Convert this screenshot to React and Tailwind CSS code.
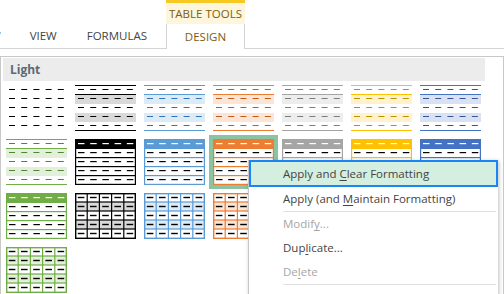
import React from 'react';

// table style thumbnails, drawn like Excel's gallery previews
const light = (line, dash, band) => ({ t: 'light', line, dash, band });
const medium = (line) => ({ t: 'medium', line });
const grid = (line, band) => ({ t: 'grid', line, band });

const gallery = [
    [
        light(null, '#000', null),
        light('#000', '#000', '#d9d9d9'),
        light('#5b9bd5', '#2e75b6', '#ddebf7'),
        light('#ed7d31', '#c55a11', '#fce4d6'),
        light('#a5a5a5', '#7b7b7b', '#ededed'),
        light('#ffc000', '#bf8f00', '#fff2cc'),
        light('#4472c4', '#2f5597', '#d9e1f2'),
    ],
    [
        light('#70ad47', '#548235', '#e2efda'),
        medium('#000'),
        medium('#5b9bd5'),
        { ...medium('#ed7d31'), selected: true },
        medium('#a5a5a5'),
        medium('#ffc000'),
        medium('#4472c4'),
    ],
    [
        medium('#70ad47'),
        grid('#000', '#d9d9d9'),
        grid('#5b9bd5', '#ddebf7'),
        grid('#ed7d31', '#fce4d6'),
        grid('#a5a5a5', '#ededed'),
        grid('#ffc000', '#fff2cc'),
        grid('#4472c4', '#d9e1f2'),
    ],
    [grid('#70ad47', '#e2efda')],
];

const cols = [0, 1, 2, 3, 4];
const rowsIdx = [0, 1, 2, 3, 4];

const Thumb = ({ s }) => {
    if (s.t === 'light') {
        return (
            <svg width="61" height="46" viewBox="0 0 61 46" className="block">
                {s.band && (
                    <>
                        <rect x="0" y="10" width="61" height="9" fill={s.band} />
                        <rect x="0" y="28" width="61" height="9" fill={s.band} />
                    </>
                )}
                {s.line && (
                    <>
                        <rect x="0" y="0" width="61" height="1" fill={s.line} />
                        <rect x="0" y="9" width="61" height="1" fill={s.line} />
                        <rect x="0" y="45" width="61" height="1" fill={s.line} />
                    </>
                )}
                {rowsIdx.map((r) =>
                    cols.map((c) => (
                        <rect key={r + '-' + c} x={12.2 * c + 3} y={9 * r + 4} width="6" height="1" fill={s.dash} />
                    ))
                )}
            </svg>
        );
    }
    if (s.t === 'medium') {
        return (
            <svg width="61" height="46" viewBox="0 0 61 46" className="block">
                <rect x="0" y="0" width="61" height="46" fill="#fff" />
                <rect x="0" y="0" width="61" height="10" fill={s.line} />
                {[18, 27, 36].map((y) => (
                    <rect key={y} x="0" y={y} width="61" height="1.2" fill={s.line} />
                ))}
                <rect x="0.6" y="0.6" width="59.8" height="44.8" fill="none" stroke={s.line} strokeWidth="1.2" />
                {rowsIdx.map((r) =>
                    cols.map((c) => (
                        <rect
                            key={r + '-' + c}
                            x={12.2 * c + 3}
                            y={9 * r + 4}
                            width="6.5"
                            height="1.2"
                            fill={r === 0 ? '#fff' : '#000'}
                        />
                    ))
                )}
            </svg>
        );
    }
    return (
        <svg width="61" height="46" viewBox="0 0 61 46" className="block">
            <rect x="0" y="0" width="61" height="46" fill="#fff" />
            <rect x="0" y="9" width="61" height="9" fill={s.band} />
            <rect x="0" y="27" width="61" height="9" fill={s.band} />
            {[9, 18, 27, 36].map((y) => (
                <rect key={'h' + y} x="0" y={y - 0.6} width="61" height="1.2" fill={s.line} />
            ))}
            {[12.2, 24.4, 36.6, 48.8].map((x) => (
                <rect key={'v' + x} x={x - 0.6} y="0" width="1.2" height="46" fill={s.line} />
            ))}
            <rect x="0.7" y="0.7" width="59.6" height="44.6" fill="none" stroke={s.line} strokeWidth="1.4" />
            {rowsIdx.map((r) =>
                cols.map((c) => (
                    <rect key={r + '-' + c} x={12.2 * c + 2.8} y={9 * r + 3.8} width="6.6" height="1.4" fill="#000" />
                ))
            )}
        </svg>
    );
};

const MenuItem = ({ children, disabled, active }) => (
    <div
        className={`flex items-center ${
            active
                ? 'h-[27px] pl-[32px] border-2 border-[#1a86f6] bg-[#d4eedf]'
                : 'h-[24px] pl-[34px]'
        } ${disabled ? 'text-[#a6a6a6]' : 'text-[#444]'}`}
    >
        {children}
    </div>
);

const App = () => {
    return (
        <div className="relative w-[504px] h-[294px] overflow-hidden bg-white font-['Open_Sans',sans-serif]">
            {/* Ribbon tabs */}
            <div className="flex h-[49px]">
                <div className="w-[166px] flex items-end border-b border-[#d4d4d4]">
                    <div className="h-[24px] flex items-center text-[11.5px] text-[#444] whitespace-nowrap">
                        <span className="-ml-[10px]">W</span>
                        <span className="ml-[29px]">VIEW</span>
                        <span className="ml-[30px]">FORMULAS</span>
                    </div>
                </div>
                <div className="w-[79px] flex flex-col">
                    <div className="h-[3px] bg-[#f5c922]" />
                    <div className="h-[21px] bg-[#fdf6dc] flex items-center justify-center text-[11.5px] text-[#7b5c12] whitespace-nowrap">
                        TABLE TOOLS
                    </div>
                    <div className="h-[25px] border-l border-r border-[#d4d4d4] flex items-center justify-center text-[11.5px] text-[#7b5c12]">
                        DESIGN
                    </div>
                </div>
                <div className="flex-1 border-b border-[#d4d4d4]" />
            </div>

            {/* Gallery */}
            <div className="mt-[7px] h-[260px] border-t border-l border-r border-[#c8c8c8]">
                <div className="mt-[1px] ml-[2px] w-[482px] h-[23px] bg-[#ececec] flex items-center pl-[7px] text-[12px] font-bold text-[#5d6875]">
                    Light
                </div>
                <div className="mt-[4px] pl-[5px] flex flex-col gap-[8px]">
                    {gallery.map((row, i) => (
                        <div key={i} className="flex gap-[8px]">
                            {row.map((s, j) => (
                                <div
                                    key={j}
                                    className={s.selected ? 'outline-4 outline-[#8cc3a3]' : ''}
                                >
                                    <Thumb s={s} />
                                </div>
                            ))}
                        </div>
                    ))}
                </div>
            </div>

            {/* Context menu */}
            <div className="absolute left-[248px] top-[160px] w-[250px] h-[140px] bg-white border-l border-[#c6c6c6] shadow-[1px_1px_4px_rgba(0,0,0,0.25)] text-[11.5px]">
                <MenuItem active>
                    <span>
                        Apply and <span className="underline underline-offset-2">C</span>lear Formatting
                    </span>
                </MenuItem>
                <MenuItem>
                    <span>
                        Apply (and <span className="underline underline-offset-2">M</span>aintain Formatting)
                    </span>
                </MenuItem>
                <div className="ml-[34px] mr-[2px] h-px bg-[#e1e1e1]" />
                <MenuItem disabled>
                    <span>
                        Modif<span className="underline underline-offset-2">y</span>...
                    </span>
                </MenuItem>
                <MenuItem>
                    <span>
                        Dup<span className="underline underline-offset-2">l</span>icate...
                    </span>
                </MenuItem>
                <MenuItem disabled>
                    <span>
                        De<span className="underline underline-offset-2">l</span>ete
                    </span>
                </MenuItem>
                <div className="ml-[34px] mr-[2px] h-px bg-[#e1e1e1]" />
            </div>
        </div>
    );
};

export default App;
